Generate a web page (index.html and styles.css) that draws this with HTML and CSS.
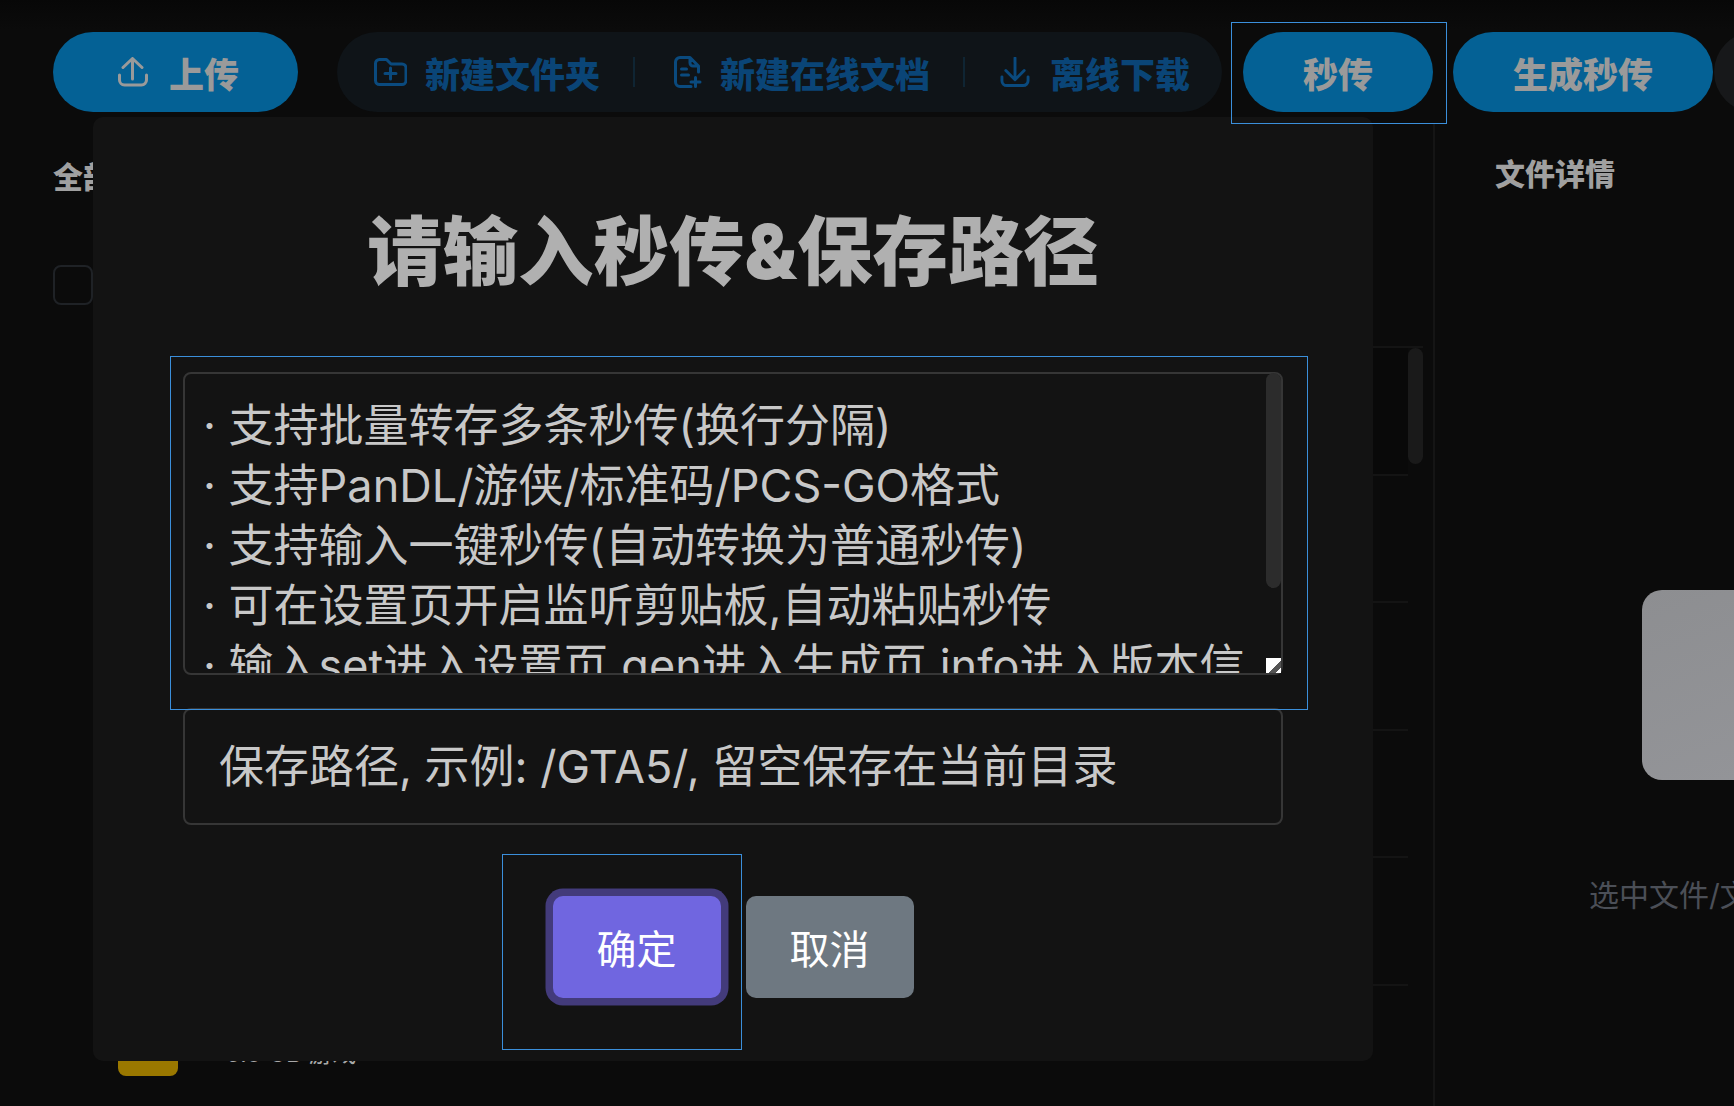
FILE: index.html
```html
<!DOCTYPE html>
<html lang="zh-CN">
<head>
<meta charset="utf-8">
<title>秒传</title>
<link rel="stylesheet" href="styles.css">
</head>
<body>
<div class="page">
  <header class="topbar">
    <button class="pill pill-upload">
      <svg class="icon" viewBox="0 0 30 30"><path d="M14.5 22V1.5M5 10.5l9.500-9 9.500 9M1.500 18v5a5 5 0 0 0 5 5h17a5 5 0 0 0 5-5v-5"/></svg>
      <span>上传</span>
    </button>
    <div class="tools">
      <div class="tool">
        <svg class="icon icon-folder" viewBox="0 0 33 28"><path d="M1.500 5.500a4 4 0 0 1 4-4h7l4.500 4.500h11a4 4 0 0 1 4 4v12.500a4 4 0 0 1-4 4h-22.500a4 4 0 0 1-4-4zM16.500 10v11M11 15.500h11"/></svg>
        <span>新建文件夹</span>
      </div>
      <i class="sep"></i>
      <div class="tool">
        <svg class="icon icon-file" viewBox="0 0 28 32"><path d="M17 30.500H6a4.500 4.500 0 0 1-4.500-4.500V6A4.500 4.500 0 0 1 6 1.500h10L24.500 10v6M16 1.500V7a3 3 0 0 0 3 3h5.500M7.500 13h5M7.500 19h7M21.500 21.500v9M17 26h9"/></svg>
        <span>新建在线文档</span>
      </div>
      <i class="sep sep-2"></i>
      <div class="tool">
        <svg class="icon" viewBox="0 0 30 31"><path d="M15 1v22M5.500 14l9.500 9.500 9.500-9.500M1.500 20.500v4a5 5 0 0 0 5 5h17a5 5 0 0 0 5-5v-4"/></svg>
        <span>离线下载</span>
      </div>
    </div>
    <button class="pill pill-fast">秒传</button>
    <button class="pill pill-gen">生成秒传</button>
    <div class="pill-more"></div>
  </header>

  <main class="body">
    <section class="list">
      <h2 class="heading">全部文件</h2>
      <div class="check"></div>
      <div class="rows">
        <i class="list-thumb"></i>
        <div class="row row-first"></div>
        <div class="row"></div>
        <div class="row"></div>
        <div class="row"></div>
        <div class="row"></div>
        <div class="row row-file">
          <i class="folder"></i>
          <span class="file-name">5.0 GB 游戏</span>
        </div>
      </div>
    </section>
    <aside class="details">
      <h2 class="heading">文件详情</h2>
      <div class="thumb-box"></div>
      <p class="hint">选中文件/文件夹查看详情</p>
    </aside>
  </main>

  <div class="dialog">
    <h1 class="dialog-title">请输入秒传&amp;保存路径</h1>
    <div class="codes-wrap">
      <textarea class="codes" spellcheck="false">· 支持批量转存多条秒传(换行分隔)
· 支持PanDL/游侠/标准码/PCS-GO格式
· 支持输入一键秒传(自动转换为普通秒传)
· 可在设置页开启监听剪贴板,自动粘贴秒传
· 输入set进入设置页,gen进入生成页,info进入版本信息</textarea>
      <i class="codes-thumb"></i>
      <i class="codes-corner"></i>
    </div>
    <div class="path">保存路径, 示例: /GTA5/, 留空保存在当前目录</div>
    <div class="actions">
      <button class="btn btn-ok">确定</button>
      <button class="btn btn-cancel">取消</button>
    </div>
  </div>

  <i class="mark mark-fast"></i>
  <i class="mark mark-codes"></i>
  <i class="mark mark-ok"></i>
</div>
</body>
</html>
```
FILE: styles.css
```css
* { box-sizing: border-box; }
html, body { margin: 0; padding: 0; }
body {
  background: #0b0b0b;
  font-family: "Inter", "Noto Sans CJK SC", sans-serif;
  overflow: hidden;
}
.page {
  position: relative;
  width: 1734px;
  height: 1106px;
  overflow: hidden;
}

/* top bar */
.topbar {
  display: flex;
  align-items: flex-start;
  height: 123px;
  padding: 32px 0 11px 53px;
  background: linear-gradient(#070707, #0b0b0b 30px);
}
.pill {
  flex: none;
  display: flex;
  align-items: center;
  justify-content: center;
  height: 80px;
  border: 0;
  border-radius: 40px;
  background: #046195;
  color: #9a9a9a;
  font: 900 35px/1 "Noto Sans CJK SC", sans-serif;
  white-space: nowrap;
}
.icon {
  flex: none;
  width: 30px;
  height: 30px;
  fill: none;
  stroke: currentColor;
  stroke-width: 3;
  stroke-linecap: round;
  stroke-linejoin: round;
}
.pill-upload { width: 245px; padding: 0 59px 0 65px; gap: 21px; }
.pill-fast { width: 190px; margin-left: 21px; }
.pill-gen { width: 260px; margin-left: 20px; }
.pill-more {
  flex: none;
  width: 120px;
  height: 80px;
  margin-left: 1px;
  border-radius: 40px;
  background: #17181a;
}
.tools {
  flex: none;
  display: flex;
  align-items: center;
  width: 885px;
  height: 80px;
  margin-left: 39px;
  padding-left: 37px;
  border-radius: 40px;
  background: #0f1418;
  color: #0a4577;
  font: 900 35px/1 "Noto Sans CJK SC", sans-serif;
  white-space: nowrap;
}
.tool { display: flex; align-items: center; gap: 18px; }
.tool .icon { color: #0a4a7e; }
.icon-folder { width: 33px; height: 28px; }
.icon-file { width: 28px; height: 32px; }
.tool:nth-of-type(3) { gap: 19px; }
.sep {
  flex: none;
  width: 2px;
  height: 30px;
  margin: 0 39px 0 33px;
  background: #0f2533;
}
.sep-2 { margin-right: 35px; }
.tool:last-child { gap: 20px; }

/* page body */
.body { display: flex; height: 983px; }
.heading {
  margin: 0;
  color: #a0a0a0;
  font: 900 30px/40px "Noto Sans CJK SC", sans-serif;
}
.list {
  flex: none;
  width: 1433px;
  padding: 32px 10px 0 53px;
}
.check {
  width: 40px;
  height: 40px;
  margin-top: 70px;
  border: 2px solid #1f2226;
  border-radius: 8px;
}
.rows {
  position: relative;
  margin: 41px 0 0 50px;
  padding-right: 15px;
  border-top: 2px solid #141414;
}
.row {
  height: 127.5px;
  border-bottom: 2px solid #141414;
}
.row-first { background: #090909; }
.row-file {
  display: flex;
  align-items: flex-start;
  height: 130px;
  padding: 36px 0 0 15px;
  border-bottom: 0;
}
.list-thumb {
  position: absolute;
  top: 0;
  right: 0;
  width: 15px;
  height: 116px;
  border-radius: 8px;
  background: #1a1a1a;
}
.folder {
  flex: none;
  width: 60px;
  height: 54px;
  border-radius: 8px;
  background: #9a7800;
}
.file-name {
  margin: 12px 0 0 48px;
  color: #a8a8a8;
  font: 400 24px/40px "Inter", "Noto Sans CJK SC", sans-serif;
  white-space: nowrap;
}
.details {
  flex: none;
  width: 500px;
  padding: 29px 0 0 60px;
  border-left: 2px solid #151515;
}
.thumb-box {
  width: 190px;
  height: 190px;
  margin: 398px 0 0 147px;
  border-radius: 20px;
  background: linear-gradient(160deg, #8d8e91, #949599);
}
.hint {
  margin: 95px 0 0 94px;
  color: #4b4f57;
  font: 400 30px/40px "Inter", "Noto Sans CJK SC", sans-serif;
  white-space: nowrap;
}

/* dialog */
.dialog {
  position: absolute;
  left: 93px;
  top: 117px;
  width: 1280px;
  height: 944px;
  padding: 90px 90px 0;
  border-radius: 10px;
  background: #131313;
}
.dialog-title {
  margin: 0;
  height: 90px;
  color: #b0b0b0;
  text-align: center;
  font: 900 75.5px/90px "Inter", "Noto Sans CJK SC", sans-serif;
  white-space: nowrap;
}
.codes-wrap {
  position: relative;
  width: 1100px;
  height: 303px;
  margin-top: 75px;
}
.codes {
  display: block;
  width: 100%;
  height: 100%;
  padding: 22px 0 0 18px;
  border: 2px solid #363636;
  border-radius: 8px;
  outline: 0;
  background: transparent;
  color: #c8c8c8;
  font: 400 45px/60px "Inter", "Noto Sans CJK SC", sans-serif;
  resize: none;
  overflow: hidden;
}
.codes-thumb {
  position: absolute;
  top: 1px;
  right: 2px;
  width: 15px;
  height: 215px;
  border-radius: 8px;
  background: #2c2c2c;
}
.codes-corner {
  position: absolute;
  right: 2px;
  bottom: 2px;
  width: 15px;
  height: 15px;
  background: linear-gradient(135deg, #fff 0 58%, #555 58% 82%, #fff 82%);
}
.path {
  display: flex;
  align-items: center;
  width: 1100px;
  height: 117px;
  margin-top: 33px;
  padding-left: 34px;
  border: 2px solid #363636;
  border-radius: 8px;
  color: #c8c8c8;
  font: 400 45px/60px "Inter", "Noto Sans CJK SC", sans-serif;
  white-space: nowrap;
}
.actions {
  display: flex;
  justify-content: center;
  gap: 25px;
  margin-top: 71px;
}
.btn {
  width: 168px;
  height: 102px;
  border: 0;
  border-radius: 10px;
  color: #fff;
  font: 400 40px/1 "Noto Sans CJK SC", sans-serif;
}
.btn-ok {
  background: #7066e0;
  box-shadow: 0 0 0 7.5px #433b7b;
}
.btn-cancel { background: #6e7881; }

/* focus frames drawn over the page */
.mark {
  position: absolute;
  border: 1px solid #3b8fdb;
  pointer-events: none;
}
.mark-fast { left: 1231px; top: 22px; width: 216px; height: 102px; }
.mark-codes { left: 170px; top: 356px; width: 1138px; height: 354px; }
.mark-ok { left: 502px; top: 854px; width: 240px; height: 196px; }
```
